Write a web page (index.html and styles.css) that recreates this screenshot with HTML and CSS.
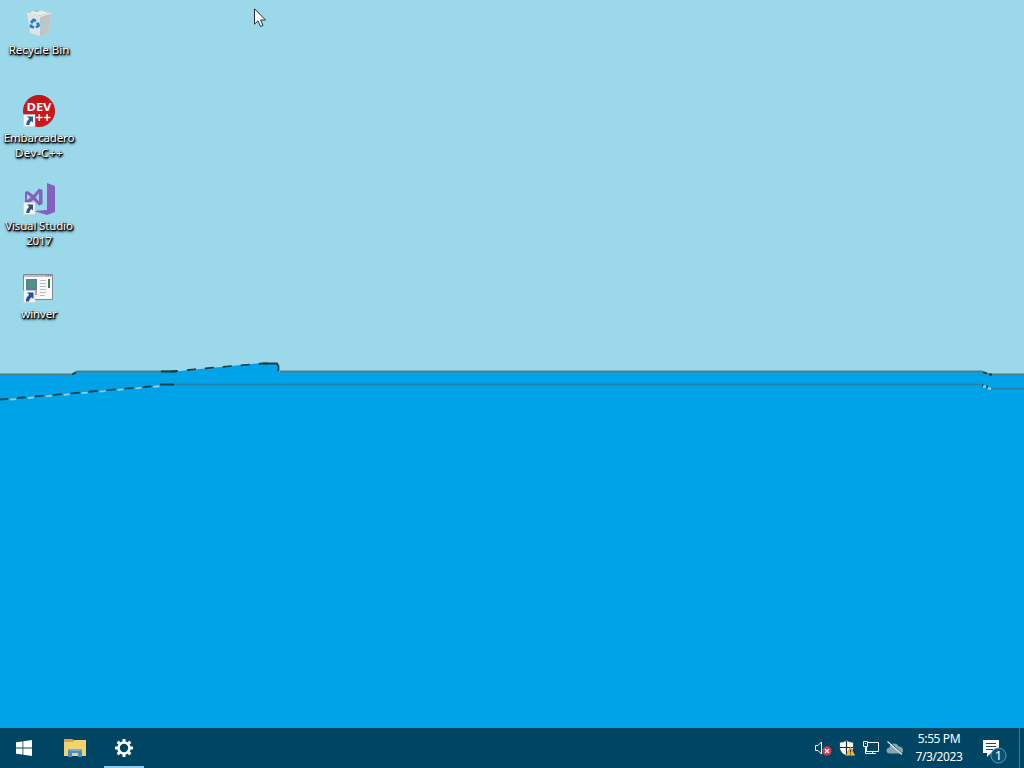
FILE: index.html
```html
<!DOCTYPE html>
<html lang="en">
<head>
    <meta charset="UTF-8">
    <title>Desktop</title>
    <link rel="stylesheet" href="styles.css">
</head>
<body>
<svg class="wallpaper" viewBox="0 0 1024 728" preserveAspectRatio="none">
    <path class="water" d="M0 375H72L77 372H170L262 363H275L279 366V372H982L989 375H1024V728H0Z"/>
    <path class="shore" d="M0 374.5H72L77 371.5H170M280 371.5H982L990 374.5H1024"/>
    <path class="shore faint" d="M168 384.5H982M990 388.5H1024"/>
    <path class="dash-light upper" d="M180 371.5L258 364"/>
    <path class="dash-dark" d="M170 371.500L262 363.500H274"/>
    <path class="dash-dark" d="M0 399.500L160 385.500"/>
    <path class="dash-light" d="M0 400.500L162 386"/>
    <path class="edge" d="M72 374.5L76 372.5M161 371.5H177M160 384.5H174M263 363.5H277L278.5 366V371.5M983 372.5L987 373.5M989 374.5H992M982 385.5H984M986 386.5H988"/>
    <path class="spark" d="M983 386.5H986M988 388.5H991"/>
</svg>

<main class="desktop">
    <div class="shortcut">
        <svg class="icon" viewBox="0 0 32 32">
            <path fill="#e0e3e5" d="M4 6L13 3L28 6L25.500 26L17 29L7 26Z"/>
            <path fill="#bfc4c7" d="M17 10L28 6L25.500 26L17 29Z"/>
            <path fill="#aab5b9" d="M4 6L13 3L28 6L17 10Z"/>
            <path fill="#e8ebec" d="M6 6L10 4L14 5L18 3.500L26 6L17 8.500Z"/>
            <path fill="none" stroke="#eef0f0" d="M4 6L17 9.500L28 6"/>
            <g fill="none" stroke="#1685cf" stroke-width="2.800">
                <path d="M8 16L10.500 13L13 14"/>
                <path d="M14.500 15.500L15.500 18.500L13 20.500"/>
                <path d="M11 20.500L8 19.500L8 17.500"/>
            </g>
        </svg>
        <span class="label wide">Recycle Bin</span>
    </div>
    <div class="shortcut">
        <svg class="icon" viewBox="0 0 32 32">
            <circle cx="16" cy="16" r="16" fill="#cc171e"/>
            <path fill="#b80f18" d="M4 5.500A16 16 0 0 1 27 4.500L20 8Z" opacity=".5"/>
            <text class="dev" x="16" y="16" textLength="25" lengthAdjust="spacingAndGlyphs">DEV</text>
            <path fill="none" stroke="#fff" stroke-width="1.5" d="M13 22.500H19.500M16.300 19V26M20.800 22.500H27.500M24.100 19V26"/>
            <path fill="#f7f7f7" stroke="#c8cdd0" stroke-width=".6" d="M.5 19.500H12V31.500H.5Z"/>
            <path fill="#2f5f96" d="M4 21.500H10V27.500L8.300 26Q6.500 27.500 6.300 30H3.300Q3 26.500 6.200 23.700Z"/>
        </svg>
        <span class="label">Embarcadero<br><span class="loose">Dev-C++</span></span>
    </div>
    <div class="shortcut">
        <svg class="icon" viewBox="0 0 32 32">
            <path fill="#8660bf" d="M24 0L32 3V29L24 32L11 28L24 27Z"/>
            <path fill="#8660bf" fill-rule="evenodd" d="M2 9L4.500 8L10.500 12L16 5.500L19.500 7V21L16 22.500L10.500 17L4.500 21L2 20ZM4 11V17L8 14.200ZM16 10L12.500 14.300L16 18.500Z"/>
            <path fill="#f7f7f7" stroke="#c8cdd0" stroke-width=".6" d="M.5 19.500H12V31.500H.5Z"/>
            <path fill="#2f5382" d="M4 21.500H10V27.500L8.300 26Q6.500 27.500 6.300 30H3.300Q3 26.500 6.200 23.700Z"/>
        </svg>
        <span class="label">Visual Studio<br>2017</span>
    </div>
    <div class="shortcut">
        <svg class="icon" viewBox="0 0 32 32">
            <path fill="#f8f8f8" stroke="#81888e" d="M.5 3.500H29.500V28.500H.5Z"/>
            <path fill="#b7bdc9" d="M1 4H29V6H1Z"/>
            <path fill="#547dbb" d="M23 4H24V5H23ZM25 4H26V5H25ZM27 4H28V5H27Z"/>
            <path fill="#5482a2" d="M3 8H14V20H3Z"/>
            <path fill="#509579" d="M5 10H13V17H5Z"/>
            <path fill="#cc9983" d="M12 19H14V24H12Z"/>
            <path stroke="#bdbdbd" d="M17 9.500H23M17 12.500H23M17 15.500H23M17 18.500H23M17 21.500H23M17 24.500H22"/>
            <path fill="#338354" d="M25 8H27V17H25Z"/>
            <path fill="#f7f7f7" stroke="#c8cdd0" stroke-width=".6" d="M.5 19.500H12V31.500H.5Z"/>
            <path fill="#254daa" d="M4 21.500H10.500V28L8.500 26.200Q6.500 27.500 6 30.500H3Q2.500 26.500 6.200 23.700Z"/>
        </svg>
        <span class="label">winver</span>
    </div>
</main>

<footer class="taskbar">
    <div class="apps">
        <div class="app">
            <svg width="16" height="16" viewBox="0 0 16 16" fill="#fff">
                <path d="M0 2.300L6.500 1.400V7.600H0ZM7.300 1.300L16 0V7.600H7.300ZM0 8.400H6.500V14.600L0 13.700ZM7.300 8.400H16V16L7.300 14.700Z"/>
            </svg>
        </div>
        <div class="app explorer">
            <svg width="22" height="18" viewBox="0 0 22 18">
                <path fill="#dca737" d="M0 0H8L10 1H21V7H0Z"/>
                <path fill="#f3d36f" d="M0 3H9L11 1H22V17H0Z"/>
                <path fill="#4a8fc4" d="M4 18V12Q4 10 6 10H16Q18 10 18 12V18H14V14H8V18Z"/>
                <path fill="#75addb" d="M6 10H16L17 12H5Z"/>
            </svg>
        </div>
        <div class="app running">
            <svg width="20" height="20" viewBox="0 0 20 20">
                <circle cx="10" cy="10" r="5.500" fill="none" stroke="#fff" stroke-width="2.600"/>
                <g stroke="#fff" stroke-width="3">
                    <path d="M10 1V4M10 16V19M1 10H4M16 10H19"/>
                    <path d="M3.600 3.600L5.700 5.700M14.300 14.300L16.400 16.400M3.600 16.400L5.700 14.300M14.300 5.700L16.400 3.600"/>
                </g>
            </svg>
        </div>
    </div>
    <div class="tray">
        <svg width="18" height="16" viewBox="0 0 18 16">
            <path fill="none" stroke="#fff" d="M1.500 5.500H4L7.500 2V14L4 10.500H1.500Z"/>
            <circle cx="13" cy="11" r="4.700" fill="#c93c48"/>
            <path stroke="#fff" stroke-width="1.200" d="M11 9L15 13M15 9L11 13"/>
        </svg>
        <svg width="18" height="16" viewBox="0 0 18 16">
            <path fill="#fff" stroke="#102a38" stroke-width=".7" d="M8.500 .3Q11.500 2.300 15.500 2.300V7Q15.500 13 8.500 15.700Q1.500 13 1.500 7V2.300Q5.500 2.300 8.500 .3Z"/>
            <path fill="none" stroke="#122c38" stroke-width="1.200" d="M8.500 1V15M2 7.500H15"/>
            <path fill="#f1bd42" stroke="#a57d1c" stroke-width=".4" d="M12.500 6.500L17 15.500H8Z"/>
            <path stroke="#403619" stroke-width="1.200" d="M12.500 9.500V12.500M12.500 13.500V14.500"/>
        </svg>
        <svg width="18" height="16" viewBox="0 0 18 16" fill="none" stroke="#fff">
            <path d="M5 2.500H16.500V11.500H4.500V7M6 13.500H14M10.500 11.500V13.500"/>
            <path d="M1.500 1.500H5.500V6.500H1.500ZM3.500 6.500V13.500H6M3 3.500H4"/>
        </svg>
        <svg width="18" height="16" viewBox="0 0 18 16">
            <path fill="#8ba4b2" d="M4 13.500Q.5 13.500 .5 10.500Q.5 8 3.500 7.500Q4 3.500 8 3.500Q11.500 3.500 12.500 6.500Q17 6.500 17 10.500Q17 13.500 14 13.500Z"/>
            <path stroke="#004564" d="M2.500 1L17 14.500"/>
            <path stroke="#e2e9ec" stroke-width="1.200" d="M1.500 1.500L16 14.500"/>
        </svg>
    </div>
    <div class="clock">
        <span class="time">5:55 PM</span>
        <span class="date">7/3/2023</span>
    </div>
    <div class="notifications">
        <svg width="26" height="26" viewBox="0 0 26 26">
            <path fill="#fff" d="M1 1H17V14H9L5 18V14H1Z"/>
            <path stroke="#174b64" stroke-width="1.200" d="M4 4.500H14M4 7.500H14M4 10.500H11"/>
            <circle cx="16.500" cy="16.500" r="7.500" fill="#075174" stroke="#6199b3"/>
            <text class="count" x="16.500" y="21">1</text>
        </svg>
    </div>
    <div class="show-desktop"></div>
</footer>

<svg class="cursor" width="13" height="20" viewBox="0 0 13 20">
    <path fill="#fff" stroke="#222e38" d="M.5 .8V16.200L4 12.800L6.500 18.500L9 17.400L6.600 12H11.500Z"/>
</svg>
</body>
</html>
```
FILE: styles.css
```css
body {
    height: 768px;
    margin: 0;
    display: flex;
    flex-direction: column;
    overflow: hidden;
    position: relative;
    background-color: #9bd9ea;
    font-family: "Noto Sans", "Open Sans", sans-serif;
    cursor: default;
}

.wallpaper {
    position: absolute;
    top: 0;
    left: 0;
    width: 1024px;
    height: 728px;
}

.water {
    fill: #00a2e8;
}

.shore,
.edge,
.spark,
.dash-dark,
.dash-light {
    fill: none;
    stroke: #4b7f8c;
    stroke-width: 1.8;
}

.faint {
    stroke: #287f9f;
    stroke-width: 1.5;
}

.edge {
    stroke: #173f4c;
}

.spark {
    stroke: #a7d9e6;
}

.dash-dark {
    stroke: #164450;
    stroke-dasharray: 9 9;
    stroke-dashoffset: 1;
}

.dash-light {
    stroke: #9ccbd2;
    stroke-dasharray: 6 12;
    stroke-dashoffset: -10;
}

.upper {
    stroke: #5aa6bd;
}

.desktop {
    flex: 1;
    display: flex;
    flex-direction: column;
    position: relative;
    padding-top: 7px;
}

.shortcut {
    width: 78px;
    height: 88px;
    display: flex;
    flex-direction: column;
    align-items: center;
}

.icon {
    width: 32px;
    height: 32px;
    flex: none;
}

.label {
    margin-top: 3px;
    color: #fff;
    font-size: 11.5px;
    line-height: 15px;
    letter-spacing: -0.15px;
    text-align: center;
    white-space: nowrap;
    text-shadow: 1px 1px 1px #000, 0 1px 2px #000, 1px 1px 2px #000, 1px 2px 3px rgba(0, 0, 0, 0.7);
}

.wide {
    letter-spacing: 0;
}

.loose {
    letter-spacing: 0.5px;
}

.dev {
    fill: #fff;
    font-size: 11px;
    font-weight: bold;
    text-anchor: middle;
}

.taskbar {
    height: 40px;
    display: flex;
    position: relative;
    background-color: #004564;
    color: #fff;
}

.apps {
    display: flex;
    flex: 1;
    gap: 2px;
}

.app {
    width: 48px;
    display: flex;
    align-items: center;
    justify-content: center;
}

.explorer {
    padding-left: 2px;
    width: 46px;
}

.running {
    width: 40px;
    margin-left: 4px;
    box-shadow: inset 0 -2px #8acff0;
}

.tray {
    display: flex;
    align-items: center;
    gap: 6px;
    margin-right: 2px;
}

.clock {
    width: 66px;
    display: flex;
    flex-direction: column;
    align-items: center;
    padding-top: 2px;
    box-sizing: border-box;
    font-size: 12px;
    line-height: 18px;
    letter-spacing: -0.4px;
}

.notifications {
    width: 47px;
    display: flex;
    padding: 11px 0 0 10px;
    box-sizing: border-box;
}

.count {
    fill: #fff;
    font-size: 13px;
    text-anchor: middle;
}

.show-desktop {
    width: 4px;
    border-left: 1px solid #46788f;
}

.cursor {
    position: absolute;
    top: 8px;
    left: 254px;
}
```
